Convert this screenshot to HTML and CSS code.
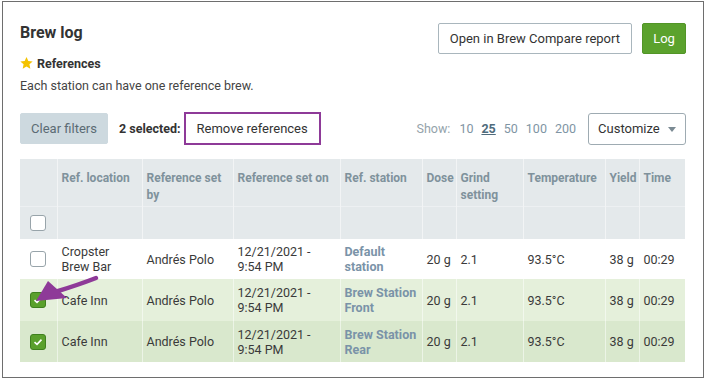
FILE: index.html
```html
<!DOCTYPE html>
<html>
<head>
<meta charset="UTF-8">
<title>Brew log</title>
<link rel="stylesheet" href="styles.css">
</head>
<body>
<div class="frame">
	<div class="top_bar">
		<h1 class="title">Brew log</h1>
		<div class="top_buttons">
			<button class="btn btn_outline">Open in Brew Compare report</button>
			<button class="btn btn_green">Log</button>
		</div>
	</div>
	<div class="refs_title">
		<svg class="star" width="13" height="12" viewBox="0 0 24 23"><polygon points="12,0 15.5,7.6 23.8,8.5 17.6,14.1 19.3,22.3 12,18.1 4.7,22.3 6.4,14.1 0.2,8.5 8.5,7.6" fill="#f4c300"/></svg>
		References
	</div>
	<p class="refs_text">Each station can have one reference brew.</p>

	<!-- панель фильтров -->
	<div class="toolbar">
		<button class="btn btn_grey">Clear filters</button>
		<span class="selected_count">2 selected:</span>
		<button class="btn btn_remove">Remove references</button>
		<div class="toolbar_right">
			<span class="show_label">Show:</span>
			<a class="show_num">10</a>
			<a class="show_num show_current">25</a>
			<a class="show_num">50</a>
			<a class="show_num">100</a>
			<a class="show_num">200</a>
			<button class="btn btn_outline btn_customize">Customize <span class="caret"></span></button>
		</div>
	</div>

	<table class="brew_table">
		<colgroup>
			<col style="width:37px"><col style="width:85px"><col style="width:91px"><col style="width:107px"><col style="width:82px">
			<col style="width:34px"><col style="width:67px"><col style="width:82px"><col style="width:34px"><col style="width:46px">
		</colgroup>
		<thead>
			<tr class="head_titles">
				<th></th>
				<th>Ref. location</th>
				<th>Reference set by</th>
				<th>Reference set on</th>
				<th>Ref. station</th>
				<th>Dose</th>
				<th>Grind setting</th>
				<th>Temperature</th>
				<th>Yield</th>
				<th>Time</th>
			</tr>
			<tr class="head_filters">
				<th><span class="chk"></span></th>
				<th></th><th></th><th></th><th></th><th></th><th></th><th></th><th></th><th></th>
			</tr>
		</thead>
		<tbody>
			<tr>
				<td><span class="chk"></span></td>
				<td>Cropster Brew Bar</td>
				<td>Andrés Polo</td>
				<td>12/21/2021 -<br>9:54 PM</td>
				<td class="station">Default station</td>
				<td>20 g</td>
				<td>2.1</td>
				<td>93.5°C</td>
				<td>38 g</td>
				<td>00:29</td>
			</tr>
			<tr class="row_sel">
				<td><span class="chk chk_on"><svg width="10" height="8" viewBox="0 0 10 8"><polyline points="1.5,4.2 4,6.4 8.5,1.6" fill="none" stroke="#fff" stroke-width="1.6"/></svg></span></td>
				<td>Cafe Inn</td>
				<td>Andrés Polo</td>
				<td>12/21/2021 -<br>9:54 PM</td>
				<td class="station">Brew Station Front</td>
				<td>20 g</td>
				<td>2.1</td>
				<td>93.5°C</td>
				<td>38 g</td>
				<td>00:29</td>
			</tr>
			<tr class="row_sel row_sel_alt">
				<td><span class="chk chk_on"><svg width="10" height="8" viewBox="0 0 10 8"><polyline points="1.5,4.2 4,6.4 8.5,1.6" fill="none" stroke="#fff" stroke-width="1.6"/></svg></span></td>
				<td>Cafe Inn</td>
				<td>Andrés Polo</td>
				<td>12/21/2021 -<br>9:54 PM</td>
				<td class="station">Brew Station Rear</td>
				<td>20 g</td>
				<td>2.1</td>
				<td>93.5°C</td>
				<td>38 g</td>
				<td>00:29</td>
			</tr>
		</tbody>
	</table>
</div>

<!-- стрелка-пометка на скриншоте -->
<svg class="arrow_mark" width="707" height="380" viewBox="0 0 707 380">
	<path d="M96,278 Q78,285 55,292" fill="none" stroke="#8e3a98" stroke-width="4.5" stroke-linecap="round"/>
	<polygon points="36,301 48,281 67,298" fill="#8e3a98"/>
</svg>
</body>
</html>
```

FILE: styles.css
```css
body {
	margin: 0;
	background: #fff;
	font-family: Roboto, "Liberation Sans", sans-serif;
	color: #3a3a3a;
	position: relative;
}

/*рамка скриншота*/
.frame {
	margin: 1px 3px 2px 2px;
	height: 377px;
	box-sizing: border-box;
	border: 1px solid #6e6e6e;
	padding: 21px 17px 0 17px;
}

.top_bar {
	display: flex;
	justify-content: space-between;
	align-items: flex-start;
}
.title {
	margin: 0;
	font-size: 16px;
	line-height: 20px;
	font-weight: bold;
	color: #333;
}
.top_buttons {
	display: flex;
	gap: 10px;
}

.btn {
	font-family: Roboto, "Liberation Sans", sans-serif;
	font-size: 13px;
	height: 31px;
	padding: 0 11px;
	border-radius: 2px;
	cursor: pointer;
	color: #333;
	background: #fff;
}
.btn_outline {
	border: 1px solid #a9b6bd;
}
.btn_green {
	background: #5ba22d;
	border: 1px solid #529527;
	color: #fff;
	width: 44px;
	padding: 0;
}
.btn_grey {
	background: #cdd9df;
	border: 1px solid #cdd9df;
	color: #5b6b74;
	width: 88px;
	padding: 0;
}
.btn_remove {
	height: 33px;
	border: 2px solid #8e3a98;
	border-radius: 0;
	padding: 0 11px;
	margin-left: 3px;
}

.refs_title {
	display: flex;
	align-items: center;
	gap: 4px;
	margin-top: 2px;
	font-size: 12.5px;
	line-height: 16px;
	font-weight: bold;
	color: #333;
}
.star {
	margin-top: -2px;
}
.refs_text {
	margin: 6px 0 0 0;
	font-size: 12.5px;
	line-height: 16px;
	color: #444;
}

.toolbar {
	display: flex;
	align-items: center;
	height: 33px;
	margin-top: 18px;
}
.selected_count {
	font-size: 12.5px;
	font-weight: bold;
	color: #333;
	margin-left: 11px;
}
.toolbar_right {
	margin-left: auto;
	display: flex;
	align-items: center;
	font-size: 12.5px;
}
.show_label {
	color: #94a3ab;
	margin-right: 9px;
}
.show_num {
	color: #7f95a4;
	margin-right: 8px;
}
.show_current {
	color: #4f6b7c;
	font-weight: bold;
	text-decoration: underline;
}
.btn_customize {
	margin-left: 4px;
	height: 32px;
	width: 98px;
	padding: 0;
	border-color: #9eabb2;
	border-radius: 3px;
}
.caret {
	display: inline-block;
	width: 0;
	height: 0;
	border-left: 4px solid transparent;
	border-right: 4px solid transparent;
	border-top: 5px solid #7b8a93;
	margin-left: 5px;
	vertical-align: middle;
}

/*таблица*/
.brew_table {
	margin-top: 14px;
	width: 665px;
	table-layout: fixed;
	border-collapse: collapse;
	font-size: 12.5px;
}
.brew_table th {
	background: #e4e9eb;
	color: #7f929c;
	font-size: 12px;
	font-weight: bold;
	text-align: left;
	vertical-align: top;
	line-height: 17px;
	padding: 11px 2px 2px 4px;
	border-left: 1px solid rgba(255, 255, 255, 0.5);
}
.brew_table th:first-child,
.brew_table td:first-child {
	border-left: none;
	text-align: center;
	padding-left: 0;
	padding-right: 0;
}
.head_titles th {
	height: 34px;
}
.head_filters th {
	height: 32px;
	padding: 0;
	vertical-align: middle;
	border-top: 1px solid rgba(255, 255, 255, 0.35);
}
.brew_table td {
	padding: 5px 2px 5px 4px;
	line-height: 15px;
	height: 30px;
	vertical-align: middle;
	color: #3a3a3a;
	border-left: 1px solid rgba(255, 255, 255, 0.5);
}
.brew_table td.station {
	color: #7a93a8;
	font-weight: bold;
}
.row_sel td {
	background: #e5f0db;
	height: 32px;
}
.row_sel_alt td {
	background: #d9e8cd;
	height: 31px;
}

.chk {
	display: inline-flex;
	align-items: center;
	justify-content: center;
	width: 16px;
	height: 16px;
	box-sizing: border-box;
	border: 1.5px solid #98a4aa;
	border-radius: 3px;
	background: #fff;
	vertical-align: middle;
}
.chk_on {
	background: #5aa02c;
	border-color: #3f801e;
}

.arrow_mark {
	position: absolute;
	left: 0;
	top: 0;
	pointer-events: none;
}
```
